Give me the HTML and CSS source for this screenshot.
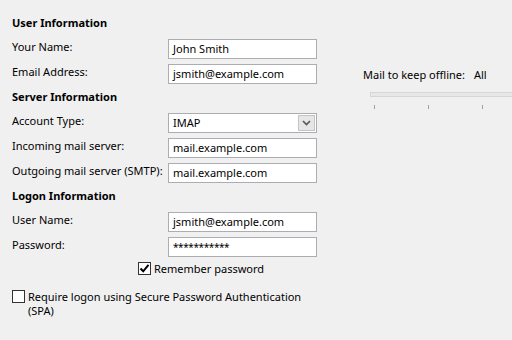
FILE: index.html
```html
<!DOCTYPE html>
<html lang="en">
<head>
    <meta charset="UTF-8">
    <meta name="viewport" content="width=device-width, initial-scale=1.0">
    <title>Account Settings</title>
    <link rel="stylesheet" href="styles.css">
</head>
<body>
<div class="page">
    <div class="left">
        <!-- User Information -->
        <div class="section-title first">User Information</div>
        <div class="row">
            <label class="label">Your Name:</label>
            <div class="field">John Smith</div>
        </div>
        <div class="row">
            <label class="label">Email Address:</label>
            <div class="field">jsmith@example.com</div>
        </div>

        <!-- Server Information -->
        <div class="section-title">Server Information</div>
        <div class="row">
            <label class="label">Account Type:</label>
            <div class="field select">
                <span>IMAP</span>
                <span class="drop-btn">
                    <svg width="9" height="6" viewBox="0 0 9 6"><path d="M1 1 L4.5 4.5 L8 1" fill="none" stroke="#555" stroke-width="1.6"/></svg>
                </span>
            </div>
        </div>
        <div class="row">
            <label class="label">Incoming mail server:</label>
            <div class="field">mail.example.com</div>
        </div>
        <div class="row">
            <label class="label">Outgoing mail server (SMTP):</label>
            <div class="field">mail.example.com</div>
        </div>

        <!-- Logon Information -->
        <div class="section-title">Logon Information</div>
        <div class="row">
            <label class="label">User Name:</label>
            <div class="field">jsmith@example.com</div>
        </div>
        <div class="row">
            <label class="label">Password:</label>
            <div class="field password">***********</div>
        </div>
        <div class="check-row remember">
            <span class="checkbox checked">
                <svg width="11" height="11" viewBox="0 0 11 11"><path d="M1.5 5.5 L4.2 8.3 L9.5 1.8" fill="none" stroke="#000" stroke-width="2"/></svg>
            </span>
            <span>Remember password</span>
        </div>
        <div class="check-row spa">
            <span class="checkbox"></span>
            <span>Require logon using Secure Password Authentication<br>(SPA)</span>
        </div>
    </div>

    <div class="right">
        <div class="offline">Mail to keep offline:<span class="offline-value">All</span></div>
        <div class="slider">
            <div class="track"></div>
            <div class="ticks">
                <span class="tick"></span>
                <span class="tick"></span>
                <span class="tick"></span>
                <span class="tick"></span>
            </div>
        </div>
    </div>
</div>
</body>
</html>
```

FILE: styles.css
```css
body {
    margin: 0;
    padding: 0;
    background-color: #f0f0f0;
    color: #000;
    font-family: "Noto Sans", "Open Sans", sans-serif;
    font-size: 11px;
    overflow: hidden;
}

.page {
    display: flex;
    width: 512px;
    height: 340px;
}

/* Left form */
.left {
    box-sizing: border-box;
    width: 351px;
    flex-shrink: 0;
    padding: 15px 0 0 12px;
}

.section-title {
    font-weight: bold;
    line-height: 16px;
    margin: 5px 0 8px;
}

.section-title.first {
    margin-top: 0;
}

.row {
    display: flex;
    align-items: flex-start;
    height: 20px;
    margin-bottom: 5px;
}

.label {
    width: 156px;
    line-height: 16px;
    flex-shrink: 0;
    white-space: nowrap;
}

.field {
    box-sizing: border-box;
    width: 149px;
    height: 20px;
    padding: 0 4px;
    line-height: 18px;
    background-color: #fff;
    border: 1px solid #abadb3;
    white-space: nowrap;
    overflow: hidden;
}

.field.password {
    letter-spacing: -0.4px;
    font-size: 10px;
}

.select {
    display: flex;
    align-items: center;
    justify-content: space-between;
    padding-right: 1px;
}

.drop-btn {
    box-sizing: border-box;
    width: 17px;
    height: 16px;
    display: flex;
    align-items: center;
    justify-content: center;
    background-color: #e6e6e6;
    border: 1px solid #c4c4c4;
}

/* Checkboxes */
.check-row {
    display: flex;
    align-items: flex-start;
    line-height: 14px;
}

.remember {
    margin-left: 126px;
}

.spa {
    margin-top: 14px;
}

.checkbox {
    box-sizing: border-box;
    width: 13px;
    height: 13px;
    margin: 0 3px 0 0;
    flex-shrink: 0;
    background-color: #fff;
    border: 1px solid #333;
    display: flex;
    align-items: center;
    justify-content: center;
}

/* Right panel */
.right {
    flex: 1;
    padding: 67px 0 0 12px;
    overflow: hidden;
}

.offline {
    line-height: 16px;
    white-space: nowrap;
}

.offline-value {
    margin-left: 9px;
}

.slider {
    margin-top: 9px;
    margin-left: 7px;
}

.track {
    height: 3px;
    width: 200px;
    background-color: #e7e7e7;
    border: 1px solid #d6d6d6;
}

.ticks {
    display: flex;
    gap: 53px;
    margin-top: 8px;
    padding-left: 4px;
}

.tick {
    width: 1px;
    height: 4px;
    background-color: #a0a0a0;
    flex-shrink: 0;
}
```
